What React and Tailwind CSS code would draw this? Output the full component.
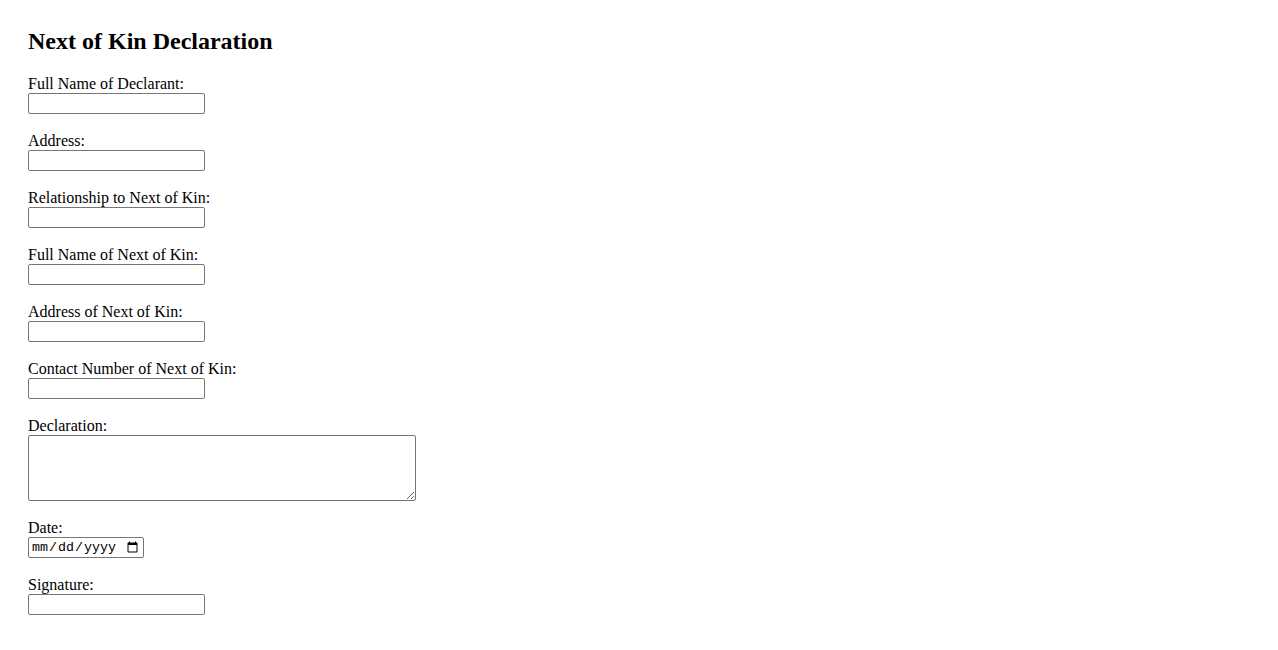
const fields = [
  "Full Name of Declarant:",
  "Address:",
  "Relationship to Next of Kin:",
  "Full Name of Next of Kin:",
  "Address of Next of Kin:",
  "Contact Number of Next of Kin:",
];

const inputCls =
  "block w-[177px] h-[21px] border border-[#767676] rounded-[2px] bg-white px-[2px] text-[13.33px] font-['Liberation_Sans',sans-serif]";

export default function App() {
  return (
    <div className="min-h-screen bg-white text-black pt-[28px] pl-[28px] font-['Liberation_Serif',serif]">
      <h2 className="text-[24px] font-bold leading-[27px] mb-[20px]">Next of Kin Declaration</h2>
      <form className="flex flex-col">
        {fields.map((f) => (
          <div key={f} className="mb-[18px]">
            <label className="block text-[16px] leading-[18px] h-[18px]">{f}</label>
            <input type="text" className={inputCls} />
          </div>
        ))}
        <div className="mb-[18px]">
          <label className="block text-[16px] leading-[18px] h-[18px]">Declaration:</label>
          <textarea className="block w-[388px] h-[66px] border border-[#767676] rounded-[2px] bg-white p-[2px] text-[13.33px] font-['Liberation_Mono',monospace] resize" />
        </div>
        <div className="mb-[18px]">
          <label className="block text-[16px] leading-[18px] h-[18px]">Date:</label>
          <input
            type="date"
            className="block w-[116px] h-[21px] border border-[#767676] rounded-[2px] bg-white px-[2px] text-[13.33px] font-['Liberation_Mono',monospace]"
          />
        </div>
        <div className="mb-[18px]">
          <label className="block text-[16px] leading-[18px] h-[18px]">Signature:</label>
          <input type="text" className={inputCls} />
        </div>
      </form>
    </div>
  );
}
